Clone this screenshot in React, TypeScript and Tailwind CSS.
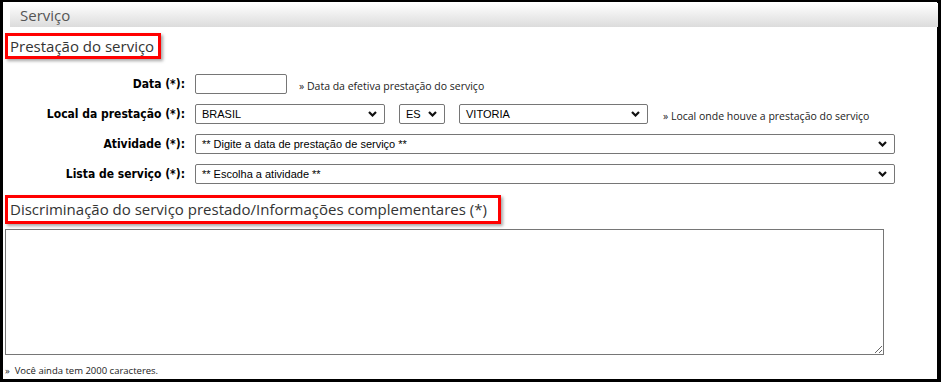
import React from 'react';

const Chevron = () => (
  <svg className="absolute right-[7px] top-1/2 -translate-y-1/2" width="9" height="6" viewBox="0 0 9 6">
    <polyline points="1,1 4.5,4.5 8,1" fill="none" stroke="#111" strokeWidth="2.2" />
  </svg>
);

const Select = ({ value, w }: { value: string; w: string }) => (
  <div className={`relative ${w} h-[20px] border border-[#767676] rounded-[2px] bg-white flex items-center pl-[6px] text-[11px] text-black font-['Liberation_Sans',Arial,sans-serif]`}>
    <span>{value}</span>
    <Chevron />
  </div>
);

const Label = ({ children }: { children: React.ReactNode }) => (
  <div className="w-[182px] text-right text-[12px] font-bold text-black font-['DejaVu_Sans_Condensed','DejaVu_Sans',sans-serif]">
    {children}
  </div>
);

const Hint = ({ children }: { children: React.ReactNode }) => (
  <span className="text-[10.5px] text-[#222] font-['Open_Sans',sans-serif]">» {children}</span>
);

const RedTitle = ({ children, h, pr }: { children: React.ReactNode; h: string; pr: string }) => (
  <div className={`inline-flex items-center ${h} ${pr} border-[3px] border-[#ff0000] shadow-[2px_2px_3px_rgba(0,0,0,0.35)] pl-[2px] text-[15px] text-[#333] font-['Open_Sans',sans-serif]`}>
    {children}
  </div>
);

export default function App() {
  return (
    <div className="w-[941px] h-[382px] bg-black pt-[2px] pl-[3px] pr-[4px] pb-[3px]">
      <div className="w-full h-full bg-white flex flex-col">
        <div className="ml-[7px] mr-[-1px] mt-[1px] h-[24px] bg-gradient-to-b from-white to-[#dcdcdc] pl-[10px] flex items-center text-[15px] text-[#555] font-['Open_Sans',sans-serif]">
          Serviço
        </div>

        <div className="ml-[2px] mt-[6px]">
          <RedTitle h="h-[26px]" pr="pr-[4px]">Prestação do serviço</RedTitle>
        </div>

        <div className="mt-[15px] flex flex-col gap-[10px]">
          <div className="flex items-center h-[20px]">
            <Label>Data (*):</Label>
            <div className="ml-[10px] w-[92px] h-[20px] border border-[#767676] rounded-[2px] bg-white" />
            <div className="ml-[12px]">
              <Hint>Data da efetiva prestação do serviço</Hint>
            </div>
          </div>

          <div className="flex items-center h-[20px]">
            <Label>Local da prestação (*):</Label>
            <div className="ml-[10px]"><Select value="BRASIL" w="w-[190px]" /></div>
            <div className="ml-[14px]"><Select value="ES" w="w-[46px]" /></div>
            <div className="ml-[14px]"><Select value="VITORIA" w="w-[189px]" /></div>
            <div className="ml-[15px]">
              <Hint>Local onde houve a prestação do serviço</Hint>
            </div>
          </div>

          <div className="flex items-center h-[20px]">
            <Label>Atividade (*):</Label>
            <div className="ml-[10px]"><Select value="** Digite a data de prestação de serviço **" w="w-[700px]" /></div>
          </div>

          <div className="flex items-center h-[20px]">
            <Label>Lista de serviço (*):</Label>
            <div className="ml-[10px]"><Select value="** Escolha a atividade **" w="w-[700px]" /></div>
          </div>
        </div>

        <div className="ml-[2px] mt-[11px]">
          <RedTitle h="h-[29px]" pr="pr-[11px]">Discriminação do serviço prestado/Informações complementares (*)</RedTitle>
        </div>

        <textarea className="ml-[2px] mt-[5px] w-[879px] h-[126px] border border-[#767676] bg-white resize" />

        <div className="ml-[2px] mt-[9px] text-[9.5px] text-[#222] font-['Open_Sans',sans-serif]">
          »&nbsp; Você ainda tem 2000 caracteres.
        </div>
      </div>
    </div>
  );
}
